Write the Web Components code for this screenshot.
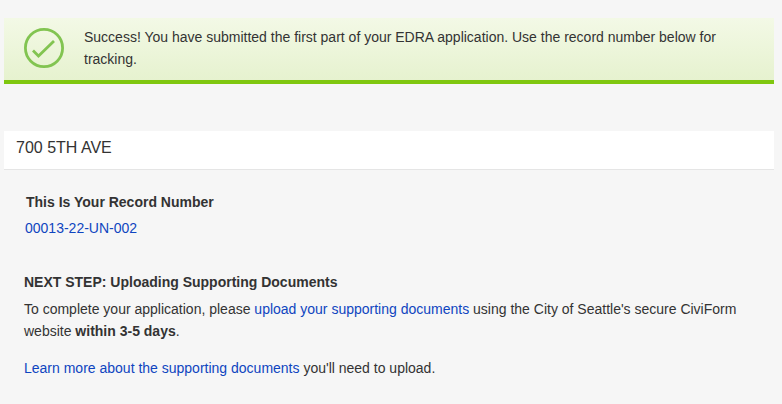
<!DOCTYPE html>
<html><head><meta charset="utf-8">
<style>
html,body{margin:0;padding:0;background:#f6f6f6;}
body{font:14px/22px "Liberation Sans",Arial,sans-serif;color:#333;width:782px;height:404px;overflow:hidden;}
</style></head>
<body>
<success-page></success-page>
<script>
function def(name, html){
  customElements.define(name, class extends HTMLElement{
    constructor(){super();this.attachShadow({mode:'open'}).innerHTML=html;}
  });
}
def('success-banner',`<style>
:host{display:flex;box-sizing:border-box;width:770px;height:66px;margin:18px 8px 0 4px;background:linear-gradient(#f3f9e6,#e6f2cf);border-bottom:4px solid #7fc70f;}
.icon{flex:none;width:40px;height:40px;margin:10px 20px 0 20px;}
.text{flex:1;padding:8px 40px 0 0;color:#333;}
</style>
<svg class="icon" viewBox="0 0 40 40" fill="none" stroke="#82c451"><circle cx="20" cy="20" r="18.6" stroke-width="2.8"/><path d="M9 22.5l5.5 5.5L30 13" stroke-width="2.8"/></svg>
<div class="text"><slot></slot></div>`);
def('address-card',`<style>
:host{display:block;box-sizing:border-box;width:770px;height:39px;margin:47px 8px 0 4px;background:#fff;border-bottom:1px solid #e5e5e5;padding:6px 12px 0;font-size:16px;line-height:22px;color:#333;}
</style><slot></slot>`);
def('record-block',`<style>
:host{display:block;margin:21px 0 0 25px;}
.t{font-weight:bold;margin-left:1px;}
.n{margin-top:4px;}
</style><div class="t"><slot name="title"></slot></div><div class="n"><slot></slot></div>`);
def('next-step',`<style>
:host{display:block;margin:32px 30px 0 24px;}
.t{font-weight:bold;}
.b{margin-top:5px;}
.l{margin-top:15px;}
</style><div class="t"><slot name="title"></slot></div><div class="b"><slot name="body"></slot></div><div class="l"><slot name="learn"></slot></div>`);
def('success-page',`<style>:host{display:block;}a{color:#0f45c0;text-decoration:none;}b{font-weight:bold;}</style>
<success-banner>Success! You have submitted the first part of your EDRA application. Use the record number below for tracking.</success-banner>
<address-card>700 5TH AVE</address-card>
<record-block><span slot="title">This Is Your Record Number</span><a href="#">00013-22-UN-002</a></record-block>
<next-step><span slot="title">NEXT STEP: Uploading Supporting Documents</span>
<span slot="body">To complete your application, please <a href="#">upload your supporting documents</a> using the City of Seattle's secure CiviForm website <b>within 3-5 days</b>.</span>
<span slot="learn"><a href="#">Learn more about the supporting documents</a> you'll need to upload.</span></next-step>`);
</script>
</body></html>
